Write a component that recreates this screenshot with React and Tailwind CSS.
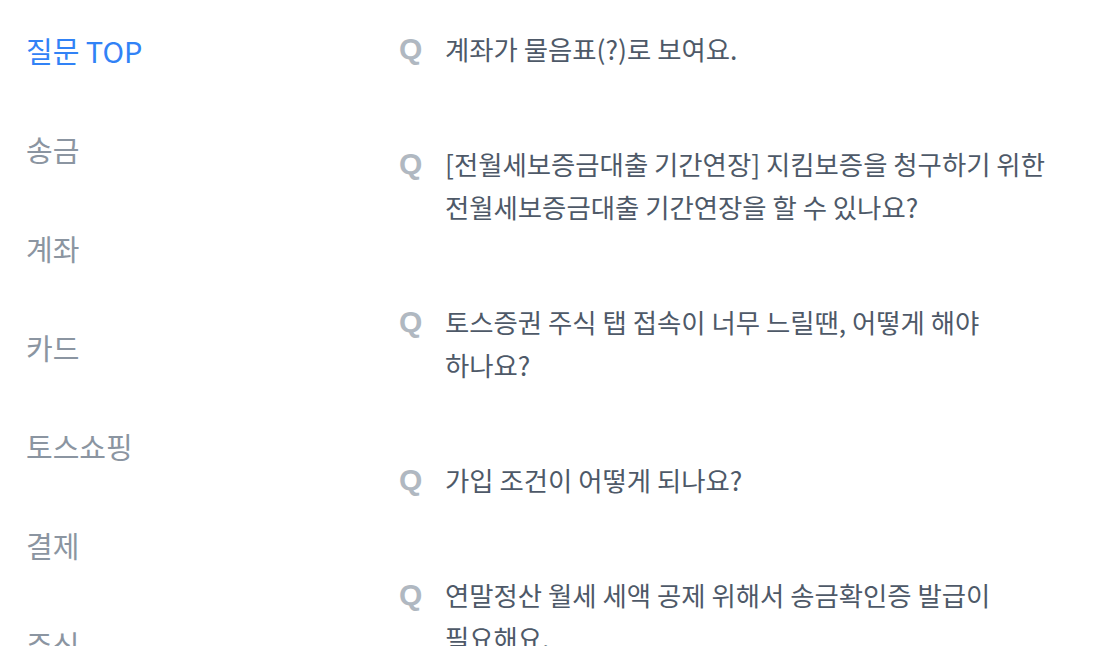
import React from "react";

const categories = ["질문 TOP", "송금", "계좌", "카드", "토스쇼핑", "결제", "주식"];

const questions = [
  "계좌가 물음표(?)로 보여요.",
  "[전월세보증금대출 기간연장] 지킴보증을 청구하기 위한 전월세보증금대출 기간연장을 할 수 있나요?",
  "토스증권 주식 탭 접속이 너무 느릴땐, 어떻게 해야 하나요?",
  "가입 조건이 어떻게 되나요?",
  "연말정산 월세 세액 공제 위해서 송금확인증 발급이 필요해요.",
];

function App() {
  return (
    <div className="h-[646px] overflow-hidden bg-white font-['Noto_Sans_CJK_KR','Noto_Sans',sans-serif]">
      <div className="flex pl-[26px]">
        {/* Category nav */}
        <ul className="w-[373px] shrink-0 pt-[32px] flex flex-col gap-[63px]">
          {categories.map((name, i) => (
            <li
              key={name}
              className={`text-[29px] leading-[36px] font-normal ${
                i === 0 ? "text-[#3182f6]" : "text-[#8b95a1]"
              }`}
            >
              {name}
            </li>
          ))}
        </ul>

        {/* Question list */}
        <ul className="pt-[27px] flex flex-col gap-[72px]">
          {questions.map((q) => (
            <li key={q} className="flex">
              <span className="w-[46px] shrink-0 text-[30px] leading-[43px] font-bold text-[#b0b8c1] font-['Liberation_Sans',sans-serif]">
                Q
              </span>
              <p className="w-[620px] text-[26.4px] leading-[43px] text-[#4e5968] break-keep">
                {q}
              </p>
            </li>
          ))}
        </ul>
      </div>
    </div>
  );
}

export default App;
